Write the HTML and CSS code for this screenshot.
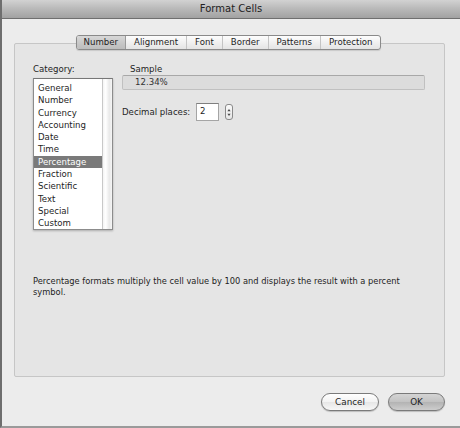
FILE: index.html
```html
<!DOCTYPE html>
<html>
<head>
<meta charset="utf-8">
<link rel="stylesheet" href="styles.css">
</head>
<body>
<div class="window">
  <div class="titlebar">Format Cells</div>
  <div class="content">
    <div class="tabs">
      <span class="tab selected">Number</span>
      <span class="tab">Alignment</span>
      <span class="tab">Font</span>
      <span class="tab">Border</span>
      <span class="tab">Patterns</span>
      <span class="tab">Protection</span>
    </div>
    <div class="panel">
      <div class="top">
        <div class="category">
          <div class="label">Category:</div>
          <div class="listbox">
            <ul class="items">
              <li>General</li>
              <li>Number</li>
              <li>Currency</li>
              <li>Accounting</li>
              <li>Date</li>
              <li>Time</li>
              <li class="sel">Percentage</li>
              <li>Fraction</li>
              <li>Scientific</li>
              <li>Text</li>
              <li>Special</li>
              <li>Custom</li>
            </ul>
            <div class="scrollbar"></div>
          </div>
        </div>
        <div class="options">
          <div class="sample-label">Sample</div>
          <div class="sample-box">12.34%</div>
          <div class="decimal-row">
            <span class="dec-label">Decimal places:</span>
            <span class="input">2</span>
            <span class="stepper">
              <svg width="8" height="15" viewBox="0 0 8 15">
                <path d="M4 4 L5.6 6.2 L2.4 6.2 Z" fill="#444"/>
                <path d="M4 11 L5.6 8.8 L2.4 8.8 Z" fill="#444"/>
              </svg>
            </span>
          </div>
        </div>
      </div>
      <p class="desc">Percentage formats multiply the cell value by 100 and displays the result with a percent symbol.</p>
    </div>
    <div class="buttons">
      <span class="btn cancel">Cancel</span>
      <span class="btn ok">OK</span>
    </div>
  </div>
</div>
</body>
</html>
```

FILE: styles.css
```css
* { box-sizing: border-box; }
html, body {
  margin: 0;
  padding: 0;
  background: #ececec;
}
body {
  font-family: "DejaVu Sans", "Liberation Sans", sans-serif;
  color: #1e1e1e;
}
.window {
  width: 460px;
  height: 428px;
  background: #ececec;
  border-left: 2px solid #6e6e6e;
  border-bottom: 2px solid #9a9a9a;
  display: flex;
  flex-direction: column;
}
.titlebar {
  height: 19px;
  flex: none;
  background: linear-gradient(#d2d2d2, #b8b8b8 50%, #a2a2a2);
  border-bottom: 1px solid #6f6f6f;
  font-size: 10px;
  line-height: 18px;
  text-align: center;
  color: #222;
}
.content {
  flex: 1;
  display: flex;
  flex-direction: column;
  padding: 16px 15px 0 12px;
}
.tabs {
  align-self: center;
  display: flex;
  height: 15px;
  margin-left: -2px;
  border: 1px solid #8a8a8a;
  border-radius: 3px;
  background: linear-gradient(#fdfdfd, #eeeeee 60%, #e4e4e4);
  position: relative;
  z-index: 1;
  box-shadow: 0 1px 1px rgba(0,0,0,0.12);
}
.tab {
  font-size: 8.6px;
  line-height: 13px;
  padding: 0 8px;
  border-left: 1px solid #c4c4c4;
  color: #1e1e1e;
}
.tab:first-child { border-left: none; padding: 0 7px 0 7px; }
.tab.selected {
  background: linear-gradient(#d8d8d8, #c6c6c6 60%, #bdbdbd);
  border-radius: 2px 0 0 2px;
  border-right: 1px solid #9a9a9a;
}
.tab.selected + .tab { border-left: none; }
.panel {
  margin-top: -7px;
  height: 334px;
  flex: none;
  background: #e5e5e5;
  border: 1px solid #c6c6c6;
  border-radius: 2px;
  padding: 20px 19px 0 18px;
}
.top {
  display: flex;
  gap: 9px;
}
.category { width: 80px; flex: none; }
.label, .sample-label {
  font-size: 8.6px;
  line-height: 11px;
}
.listbox {
  margin-top: 3px;
  height: 152px;
  background: #fff;
  border: 1px solid #8c8c8c;
  border-top-color: #777;
  box-shadow: 0 1px 2px rgba(0,0,0,0.25);
  display: flex;
}
.items {
  list-style: none;
  margin: 0;
  padding: 3px 0 0 0;
  flex: 1;
}
.items li {
  font-size: 8.6px;
  height: 12.3px;
  line-height: 12.3px;
  padding-left: 4px;
  white-space: nowrap;
}
.items li.sel {
  background: #7a7a7a;
  color: #fff;
}
.scrollbar {
  width: 10px;
  flex: none;
  border-left: 1px solid #c8c8c8;
  background: linear-gradient(90deg, #f4f4f4, #ffffff 30%, #e9e9e9 70%, #f6f6f6);
}
.options { flex: 1; }
.sample-label { padding-left: 8px; }
.sample-box {
  height: 15px;
  background: #dcdcdc;
  border: 1px solid #c0c0c0;
  border-top-color: #a8a8a8;
  border-radius: 2px;
  font-size: 8.6px;
  line-height: 12px;
  padding-left: 12px;
  color: #333;
}
.decimal-row {
  margin-top: 13px;
  display: flex;
  align-items: center;
}
.dec-label {
  font-size: 8.6px;
  width: 74px;
}
.input {
  width: 23px;
  height: 18px;
  background: #fff;
  border: 1px solid #a5a5a5;
  border-top-color: #7f7f7f;
  font-size: 8.6px;
  line-height: 14px;
  padding-left: 3px;
}
.stepper {
  margin-left: 6px;
  width: 8px;
  height: 16px;
  border: 1px solid #8a8a8a;
  border-radius: 3px;
  background: linear-gradient(#fafafa, #e6e6e6);
  display: flex;
  align-items: center;
  justify-content: center;
  overflow: hidden;
}
.stepper svg { display: block; flex: none; }
.desc {
  margin: 46px 0 0 0;
  font-size: 8.3px;
  line-height: 10.7px;
  padding-right: 10px;
}
.buttons {
  margin-top: 16px;
  display: flex;
  justify-content: flex-end;
  gap: 9px;
  padding-right: 0;
}
.btn {
  height: 18px;
  border: 1px solid #7a7a7a;
  border-radius: 9px;
  font-size: 8.8px;
  line-height: 16px;
  text-align: center;
  box-shadow: 0 1px 1px rgba(0,0,0,0.2);
}
.btn.cancel {
  width: 58px;
  background: linear-gradient(#ffffff, #f2f2f2 50%, #e6e6e6 51%, #f7f7f7);
}
.btn.ok {
  width: 57px;
  background: linear-gradient(#d4d4d4, #c2c2c2 50%, #b3b3b3 51%, #cdcdcd);
}
```
